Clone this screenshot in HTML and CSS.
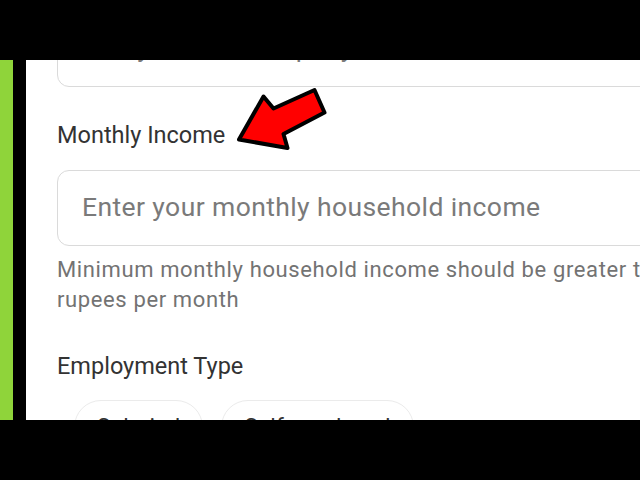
FILE: index.html
```html
<!DOCTYPE html>
<html lang="en">
<head>
<meta charset="utf-8">
<title>Monthly Income</title>
<link rel="stylesheet" href="styles.css">
</head>
<body>
<div class="screen">
  <div class="bar"></div>
  <div class="stage">
    <div class="edge-green"></div>
    <div class="edge-dark"></div>
    <main class="content">
      <form class="form">
        <input class="field first" type="text" placeholder="Add your full company name">
        <label class="label" for="income">Monthly Income</label>
        <input class="field" id="income" type="text" placeholder="Enter your monthly household income">
        <p class="helper">Minimum monthly household income should be greater than 25,000<br>rupees per month</p>
        <div class="label section">Employment Type</div>
        <div class="chips">
          <span class="chip">Salaried</span>
          <span class="chip">Self-employed</span>
        </div>
      </form>
    </main>
  </div>
  <div class="bar"></div>
  <svg class="arrow" width="640" height="480" viewBox="0 0 640 480">
    <polygon points="239,139.5 263.5,96.5 273.5,108.5 314.5,90 324.5,112.5 283.5,134 287.5,148" fill="#ff0000" stroke="#000" stroke-width="4" stroke-linejoin="round"/>
  </svg>
</div>
</body>
</html>
```
FILE: styles.css
```css
html, body {
  margin: 0;
  padding: 0;
  background: #000;
}

.screen {
  position: relative;
  width: 640px;
  height: 480px;
  overflow: hidden;
  display: flex;
  flex-direction: column;
  font-family: Roboto, "Noto Sans", sans-serif;
}

.bar {
  height: 60px;
  flex: none;
  background: #000;
}

.stage {
  height: 360px;
  flex: none;
  display: flex;
}

.edge-green {
  width: 13px;
  background: #8fd43a;
}

.edge-dark {
  width: 13px;
  background: #000;
}

.content {
  flex: 1;
  background: #fff;
  overflow: hidden;
  padding-left: 31px;
}

.form {
  width: 720px;
  display: flex;
  flex-direction: column;
  align-items: flex-start;
  margin: 0;
}

.field {
  box-sizing: border-box;
  width: 700px;
  height: 76px;
  margin: 21px 0 0 0;
  padding: 0 0 4px 24px;
  border: 1.5px solid #dadada;
  border-radius: 12px;
  background: #fff;
  font-family: Roboto, "Noto Sans", sans-serif;
  font-size: 26.5px;
  letter-spacing: 0.4px;
  color: #333;
  outline: none;
}

.field::placeholder {
  color: #7a7a7a;
  opacity: 1;
}

.field.first {
  margin-top: -49px;
}

.label {
  margin-top: 34px;
  font-size: 23.5px;
  line-height: 28px;
  color: #333;
}

.helper {
  margin: 9px 0 0 0;
  font-size: 22px;
  line-height: 30px;
  letter-spacing: 0.62px;
  color: #737373;
  white-space: nowrap;
}

.label.section {
  margin-top: 37px;
}

.chips {
  display: flex;
  gap: 18px;
  margin: 20px 0 0 17px;
}

.chip {
  padding: 8px 22px 10px;
  border: 1.5px solid #ebebeb;
  border-radius: 28px;
  font-size: 22.5px;
  line-height: 34px;
  letter-spacing: 0.3px;
  color: #333;
}

.arrow {
  position: absolute;
  left: 0;
  top: 0;
  pointer-events: none;
}
```
